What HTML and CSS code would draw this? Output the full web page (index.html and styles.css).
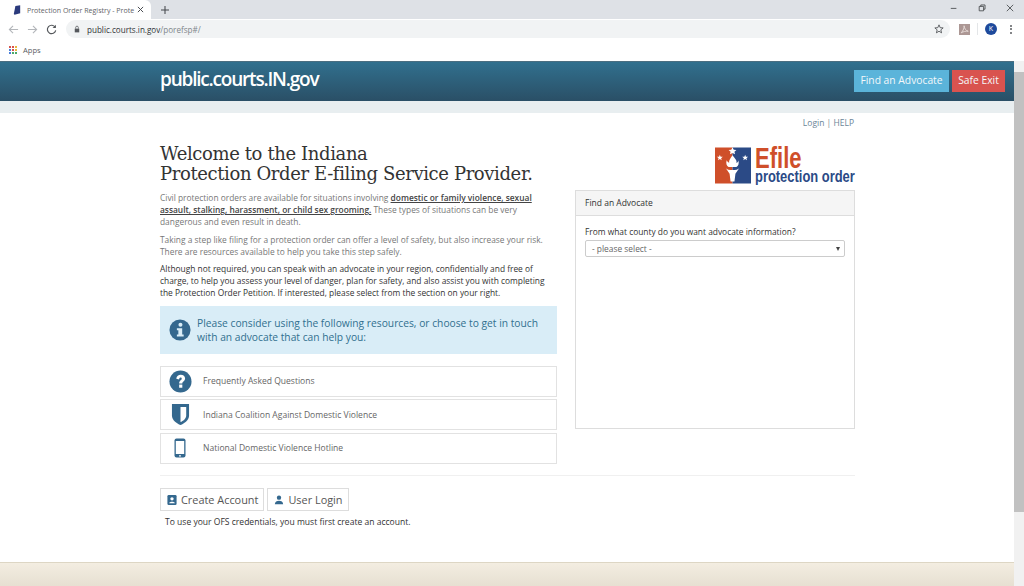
FILE: index.html
```html
<!DOCTYPE html>
<html lang="en">

<head>
    <meta charset="UTF-8" />
    <meta name="viewport" content="width=device-width, initial-scale=1.0" />
    <title>Protection Order Registry</title>
    <link rel="stylesheet" href="styles.css">
</head>

<body>
    <!-- Browser window chrome -->
    <div class="tab-strip">
        <div class="tab">
            <svg class="tab-favicon" viewBox="0 0 10 12"><path d="M3 1 L9 0 L9 10 L2 12 L1 11 Z" fill="#2b3a7c"/></svg>
            <span class="tab-title">Protection Order Registry - Prote</span>
            <svg class="tab-close" viewBox="0 0 8 8"><path d="M1 1 L7 7 M7 1 L1 7" stroke="#45484d" stroke-width="1.1"/></svg>
        </div>
        <svg class="tab-new" viewBox="0 0 10 10"><path d="M5 0 V10 M0 5 H10" stroke="#45484d" stroke-width="1.3"/></svg>
        <div class="window-controls">
            <svg viewBox="0 0 10 10"><path d="M1 5.5 H8" stroke="#3c4043" stroke-width="1"/></svg>
            <svg viewBox="0 0 10 10"><path d="M1.5 3 H7 V8.5 H1.5 Z M3.5 3 V1.2 H8.8 V6.5 H7" fill="none" stroke="#3c4043" stroke-width="1"/></svg>
            <svg viewBox="0 0 10 10"><path d="M1 1 L9 9 M9 1 L1 9" stroke="#3c4043" stroke-width="1"/></svg>
        </div>
    </div>

    <div class="toolbar">
        <svg class="nav-icon" viewBox="0 0 12 12"><path d="M11 6 H1.5 M5.5 2 L1.5 6 L5.5 10" fill="none" stroke="#b4b7bb" stroke-width="1.2"/></svg>
        <svg class="nav-icon" viewBox="0 0 12 12"><path d="M1 6 H10.5 M6.5 2 L10.5 6 L6.5 10" fill="none" stroke="#b4b7bb" stroke-width="1.2"/></svg>
        <svg class="nav-icon" viewBox="0 0 12 12"><path d="M10 3.5 A4.6 4.6 0 1 0 10.6 7" fill="none" stroke="#55585c" stroke-width="1.3"/><path d="M10.8 0.8 V4.4 H7.2 Z" fill="#55585c"/></svg>
        <div class="omnibox">
            <svg class="lock" viewBox="0 0 8 10"><path d="M1 4.5 H7 V9.5 H1 Z" fill="#55585c"/><path d="M2.2 4.5 V3 A1.8 1.8 0 0 1 5.8 3 V4.5" fill="none" stroke="#55585c"/></svg>
            <span class="url">public.courts.in.gov<span class="url-path">/porefsp#/</span></span>
            <svg class="star" viewBox="0 0 12 12"><path d="M6 1 L7.4 4.4 L11 4.7 L8.2 7 L9.1 10.6 L6 8.7 L2.9 10.6 L3.8 7 L1 4.7 L4.6 4.4 Z" fill="none" stroke="#4a4d51" stroke-width="1"/></svg>
        </div>
        <div class="ext-icon">
            <svg viewBox="0 0 10 10"><path d="M2 8 C4 6 5 3 4.6 1.6 C5 4 6 6 8.4 6.6 C6 6.2 4 7 2 8 Z" fill="none" stroke="#e9dfdc" stroke-width="0.8"/></svg>
        </div>
        <div class="toolbar-sep"></div>
        <div class="avatar">K</div>
        <div class="kebab"><i></i><i></i><i></i></div>
    </div>

    <div class="bookmarks">
        <div class="apps-grid">
            <i class="r"></i><i class="r"></i><i class="y"></i>
            <i class="b"></i><i class="r"></i><i class="y"></i>
            <i class="b"></i><i class="g"></i><i class="g"></i>
        </div>
        <span>Apps</span>
    </div>

    <div class="viewport">
        <div class="page">
            <header class="site-header">
                <div class="wrap header-row">
                    <a class="brand">public.courts.IN.gov</a>
                </div>
                <div class="header-btns">
                    <a class="btn-advocate">Find an Advocate</a>
                    <a class="btn-exit">Safe Exit</a>
                </div>
            </header>
            <div class="sub-strip"></div>

            <div class="wrap">
                <div class="top-links"><a>Login</a> | <a>HELP</a></div>

                <div class="columns">
                    <div class="left-col">
                        <h1>Welcome to the Indiana<br>Protection Order E-filing Service Provider.</h1>
                        <p class="copy">Civil protection orders are available for situations involving <a class="strong-link">domestic or family violence, sexual assault, stalking, harassment, or child sex grooming.</a> These types of situations can be very dangerous and even result in death.</p>
                        <p class="copy">Taking a step like filing for a protection order can offer a level of safety, but also increase your risk. There are resources available to help you take this step safely.</p>
                        <p class="copy copy-dark">Although not required, you can speak with an advocate in your region, confidentially and free of charge, to help you assess your level of danger, plan for safety, and also assist you with completing the Protection Order Petition. If interested, please select from the section on your right.</p>

                        <div class="info-box">
                            <svg class="info-icon" viewBox="0 0 24 24">
                                <circle cx="12" cy="12" r="11.5" fill="#34688e"/>
                                <circle cx="12.5" cy="6.2" r="2.2" fill="#d9edf7"/>
                                <path d="M8.6 10 H14.4 V16.8 H16 V19.2 H8.6 V16.8 H10.2 V12.4 H8.6 Z" fill="#d9edf7"/>
                            </svg>
                            <span>Please consider using the following resources, or choose to get in touch with an advocate that can help you:</span>
                        </div>

                        <a class="resource">
                            <span class="resource-icon">
                                <svg class="icon-faq" viewBox="0 0 24 24">
                                    <circle cx="12" cy="12" r="11.5" fill="#34688e"/>
                                    <path d="M7.6 9.2 C7.8 6.2 10 5 12.2 5 C15 5 16.8 6.7 16.8 8.9 C16.8 11.6 13.9 11.9 13.9 14 H10.6 C10.6 10.8 13.3 10.5 13.3 9 C13.3 8.2 12.8 7.7 12 7.7 C11.2 7.7 10.7 8.4 10.5 9.8 Z" fill="#fff"/>
                                    <rect x="10.6" y="15.2" width="3.3" height="3.3" fill="#fff"/>
                                </svg>
                            </span>
                            Frequently Asked Questions
                        </a>
                        <a class="resource">
                            <span class="resource-icon">
                                <svg class="icon-shield" viewBox="0 0 20 24">
                                    <path d="M1 1 H19 V13 C19 18 14 21.5 10 23 C6 21.5 1 18 1 13 Z" fill="#34688e"/>
                                    <path d="M10 4 H16 V13 C16 16.5 12.5 18.8 10 20 Z" fill="#fff"/>
                                </svg>
                            </span>
                            Indiana Coalition Against Domestic Violence
                        </a>
                        <a class="resource">
                            <span class="resource-icon">
                                <svg class="icon-phone" viewBox="0 0 12 20">
                                    <rect x="0.5" y="0.5" width="11" height="19" rx="2" fill="#34688e"/>
                                    <rect x="1.8" y="3" width="8.4" height="13" fill="#fff"/>
                                    <circle cx="6" cy="17.8" r="0.9" fill="#fff"/>
                                </svg>
                            </span>
                            National Domestic Violence Hotline
                        </a>
                    </div>

                    <div class="right-col">
                        <div class="logo">
                            <svg class="logo-mark" viewBox="0 0 37 37">
                                <rect x="0" y="0" width="18" height="37" fill="#cf4f2a"/>
                                <rect x="18" y="0" width="19" height="37" fill="#2b4a86"/>
                                <path d="M18 8 C20 11 23 13 22 16 C23.5 15 24 14 24 13 C25 16 24 19 22 20 H14 C12 19 11 16 12 13 C13 15 14 15 14.5 16 C14 13 16 11 18 8 Z" fill="#fff"/>
                                <path d="M11 21 C13 24 23 24 25 21 L21 27 L20 35 H16 L15 27 Z" fill="#fff"/>
                                <path d="M18 0 L19.3 2.4 L22 2.6 L20 4.4 L20.6 7 L18 5.6 L15.4 7 L16 4.4 L14 2.6 L16.7 2.4 Z" fill="#fff"/>
                                <path d="M5 7.5 L5.8 9.5 L8 9.6 L6.3 11 L6.9 13.1 L5 11.9 L3.1 13.1 L3.7 11 L2 9.6 L4.2 9.5 Z" fill="#fff"/>
                                <path d="M31 7.5 L31.8 9.5 L34 9.6 L32.3 11 L32.9 13.1 L31 11.9 L29.1 13.1 L29.7 11 L28 9.6 L30.2 9.5 Z" fill="#fff"/>
                            </svg>
                            <div class="logo-text">
                                <span class="logo-efile">Efile</span>
                                <span class="logo-sub">protection order</span>
                            </div>
                        </div>
                        <div class="panel">
                            <div class="panel-head">Find an Advocate</div>
                            <div class="panel-body">
                                <label class="panel-label">From what county do you want advocate information?</label>
                                <div class="fake-select">
                                    <span>- please select -</span>
                                    <i class="caret"></i>
                                </div>
                            </div>
                        </div>
                    </div>
                </div>

                <hr class="divider">

                <div class="account-btns">
                    <a class="acct-btn">
                        <svg viewBox="0 0 12 12"><rect width="11" height="12" x="0.5" rx="1.5" fill="#34688e"/><circle cx="6" cy="4.6" r="2" fill="#fff"/><path d="M2.6 10 C2.6 7.6 9.4 7.6 9.4 10 Z" fill="#fff"/></svg>
                        Create Account
                    </a>
                    <a class="acct-btn">
                        <svg viewBox="0 0 12 12"><circle cx="6" cy="3.2" r="2.6" fill="#34688e"/><path d="M1 11 C1 5.6 11 5.6 11 11 Z" fill="#34688e"/></svg>
                        User Login
                    </a>
                </div>
                <p class="acct-note">To use your OFS credentials, you must first create an account.</p>
            </div>

            <div class="page-footer"></div>
        </div>

        <div class="scrollbar">
            <div class="scroll-arrow"></div>
            <div class="scroll-thumb"></div>
        </div>
    </div>
</body>

</html>
```

FILE: styles.css
```css
body {
    margin: 0;
    height: 586px;
    overflow: hidden;
    font-family: 'Open Sans', sans-serif;
    color: #555;
    background-color: #fff;
}

a {
    text-decoration: none;
}

/* Browser tab row */
.tab-strip {
    height: 19px;
    background-color: #dee1e6;
    display: flex;
    align-items: flex-end;
}

.tab {
    width: 151px;
    height: 19px;
    box-sizing: border-box;
    padding: 0 7px 0 13px;
    background-color: #fff;
    border-radius: 0 6px 0 0;
    display: flex;
    align-items: center;
}

.tab-favicon {
    width: 8px;
    height: 10px;
    margin-right: 6px;
}

.tab-title {
    flex: 1;
    font-size: 7.05px;
    color: #5f6368;
    white-space: nowrap;
}

.tab-close {
    width: 7px;
    height: 7px;
}

.tab-new {
    width: 8px;
    height: 8px;
    margin: 0 0 5px 10px;
}

.window-controls {
    margin-left: auto;
    display: flex;
    gap: 20px;
    padding: 0 10px 7px 0;
}

.window-controls svg {
    width: 8px;
    height: 8px;
}

/* Address bar row */
.toolbar {
    height: 20px;
    display: flex;
    align-items: center;
    padding-left: 8px;
    background-color: #fff;
}

.nav-icon {
    width: 11px;
    height: 11px;
    margin-right: 8px;
}

.omnibox {
    width: 884px;
    height: 18px;
    margin-left: 1px;
    box-sizing: border-box;
    padding: 0 6px 0 8px;
    background-color: #f1f3f4;
    border-radius: 9px;
    display: flex;
    align-items: center;
}

.lock {
    width: 6px;
    height: 8px;
    margin-right: 7px;
}

.url {
    flex: 1;
    font-size: 8.1px;
    color: #303336;
}

.url-path {
    color: #80868b;
}

.star {
    width: 10px;
    height: 10px;
}

.ext-icon {
    width: 11px;
    height: 11px;
    margin-left: 9px;
    background-color: #ac9794;
}

.ext-icon svg {
    display: block;
}

.toolbar-sep {
    width: 1px;
    height: 12px;
    margin: 0 7px;
    background-color: #e4e6e8;
}

.avatar {
    width: 12px;
    height: 12px;
    border-radius: 50%;
    background-color: #1e4a9c;
    color: #fff;
    font-size: 7px;
    line-height: 12px;
    text-align: center;
}

.kebab {
    margin-left: 13px;
    display: flex;
    flex-direction: column;
    gap: 1.5px;
}

.kebab i {
    width: 2px;
    height: 2px;
    border-radius: 50%;
    background-color: #5a5d61;
}

/* Bookmarks row */
.bookmarks {
    height: 22px;
    box-sizing: border-box;
    padding: 0 0 1px 9px;
    display: flex;
    align-items: center;
    gap: 6px;
    font-size: 7.6px;
    color: #5a5d61;
    background-color: #fff;
}

.apps-grid {
    display: grid;
    grid-template-columns: repeat(3, 2px);
    grid-auto-rows: 2px;
    gap: 1px;
}

.apps-grid .r { background-color: #d9534a; }
.apps-grid .y { background-color: #e8b93f; }
.apps-grid .b { background-color: #4a7fd8; }
.apps-grid .g { background-color: #4aa86a; }

/* Page inside the browser */
.viewport {
    display: flex;
    height: 525px;
    overflow: hidden;
}

.page {
    flex: 1;
    min-width: 0;
    position: relative;
}

.scrollbar {
    width: 10px;
    background-color: #f1f1f1;
}

.scroll-arrow {
    height: 11px;
}

.scroll-thumb {
    height: 440px;
    background-color: #c1c1c1;
}

.site-header {
    height: 40px;
    background: linear-gradient(to bottom, #31708e, #2a4f66);
    border-top: 1px solid #4b6e80;
    box-sizing: border-box;
    position: relative;
}

.wrap {
    width: 695px;
    margin-left: 160px;
}

.header-row {
    height: 39px;
    display: flex;
    align-items: center;
}

.brand {
    color: #fff;
    font-size: 19px;
    font-weight: 600;
    letter-spacing: -1.2px;
    padding-bottom: 5px;
}

/* Header buttons sit at the right edge, past the content column */
.header-btns {
    position: absolute;
    top: 8px;
    right: 9px;
    display: flex;
    gap: 3px;
}

.btn-advocate,
.btn-exit {
    height: 22px;
    line-height: 21px;
    color: #f4f8fa;
    font-size: 10.3px;
    text-align: center;
}

.btn-advocate {
    width: 95px;
    background-color: #5bb4da;
}

.btn-exit {
    width: 53px;
    background-color: #d9534f;
}

.sub-strip {
    height: 12px;
    background-color: #e8eef0;
}

.top-links {
    text-align: right;
    font-size: 8.5px;
    line-height: 12px;
    padding: 4px 1px 0 0;
    color: #7a8a96;
}

.top-links a {
    color: #6b8597;
}

.columns {
    display: flex;
    gap: 18px;
    margin-top: 15px;
}

.left-col {
    width: 397px;
}

.right-col {
    width: 280px;
}

h1 {
    margin: 0 0 8px;
    font-family: 'DejaVu Serif', serif;
    font-weight: 400;
    font-size: 18px;
    letter-spacing: -0.38px;
    line-height: 20px;
    color: #333;
}

.copy {
    margin: 0 0 5px;
    font-size: 8.4px;
    line-height: 12.2px;
    color: #777;
}

.copy-dark {
    color: #333;
    margin-bottom: 6px;
}

.strong-link {
    color: #444;
    font-weight: 600;
    text-decoration: underline;
}

.info-box {
    height: 48px;
    box-sizing: border-box;
    padding: 0 12px 0 9px;
    background-color: #d9edf7;
    display: flex;
    align-items: center;
    gap: 6px;
    font-size: 10.25px;
    font-weight: 500;
    line-height: 14px;
    color: #31708f;
    margin-bottom: 12px;
}

.info-icon {
    width: 22px;
    height: 22px;
    flex-shrink: 0;
}

.resource {
    height: 31px;
    box-sizing: border-box;
    margin-bottom: 2.5px;
    border: 1px solid #e2e2e2;
    display: flex;
    align-items: center;
    font-size: 8.55px;
    color: #666;
}

.resource-icon {
    width: 42px;
    box-sizing: border-box;
    padding-right: 4px;
    display: flex;
    justify-content: center;
    flex-shrink: 0;
}

.icon-faq {
    width: 23px;
    height: 23px;
}

.icon-shield {
    width: 19px;
    height: 23px;
}

.icon-phone {
    width: 12px;
    height: 20px;
}

/* Logo above the advocate panel */
.logo {
    height: 38px;
    display: flex;
    justify-content: flex-end;
    margin: 3px 0 0;
    gap: 4px;
}

.logo-mark {
    width: 36px;
    height: 37px;
}

.logo-text {
    width: 100px;
    display: flex;
    flex-direction: column;
    font-family: 'Liberation Sans', sans-serif;
    font-weight: 700;
}

.logo-efile,
.logo-sub {
    width: max-content;
    transform: scaleX(0.76);
    transform-origin: left center;
}

.logo-efile {
    font-size: 29px;
    line-height: 23px;
    color: #cf4f2a;
}

.logo-sub {
    font-size: 17px;
    line-height: 14px;
    color: #2b4a86;
}

.panel {
    margin-top: 5px;
    height: 239px;
    box-sizing: border-box;
    border: 1px solid #ddd;
}

.panel-head {
    height: 25px;
    box-sizing: border-box;
    line-height: 24px;
    padding-left: 9px;
    background-color: #f5f5f5;
    border-bottom: 1px solid #ddd;
    font-size: 8.5px;
    color: #333;
}

.panel-body {
    padding: 9px 9px 0;
}

.panel-label {
    display: block;
    font-size: 8.4px;
    line-height: 13px;
    font-weight: 500;
    color: #333;
    margin-bottom: 2px;
}

.fake-select {
    height: 17px;
    box-sizing: border-box;
    padding: 0 4px 0 6px;
    border: 1px solid #ccc;
    border-radius: 2px;
    display: flex;
    align-items: center;
    justify-content: space-between;
    font-size: 8.4px;
    color: #666;
}

.caret {
    width: 0;
    height: 0;
    border-left: 2px solid transparent;
    border-right: 2px solid transparent;
    border-top: 4px solid #444;
}

.divider {
    border: none;
    border-top: 1px solid #f0f0f0;
    margin: 9px 0 12px;
}

.account-btns {
    display: flex;
    gap: 3px;
}

.acct-btn {
    height: 23px;
    box-sizing: border-box;
    padding: 0 5px 0 6px;
    border: 1px solid #ddd;
    display: flex;
    align-items: center;
    gap: 4px;
    font-size: 10.9px;
    color: #555;
}

.acct-btn svg {
    width: 10px;
    height: 10px;
}

.acct-note {
    margin: 5px 0 0 5px;
    font-size: 8.55px;
    line-height: 13px;
    color: #333;
}

/* Footer band cut off by the window bottom */
.page-footer {
    position: absolute;
    left: 0;
    right: 0;
    top: 501px;
    height: 24px;
    border-top: 1px solid #ddd6c4;
    background: linear-gradient(to bottom, #f3ede1, #e6dfd1);
}
```
